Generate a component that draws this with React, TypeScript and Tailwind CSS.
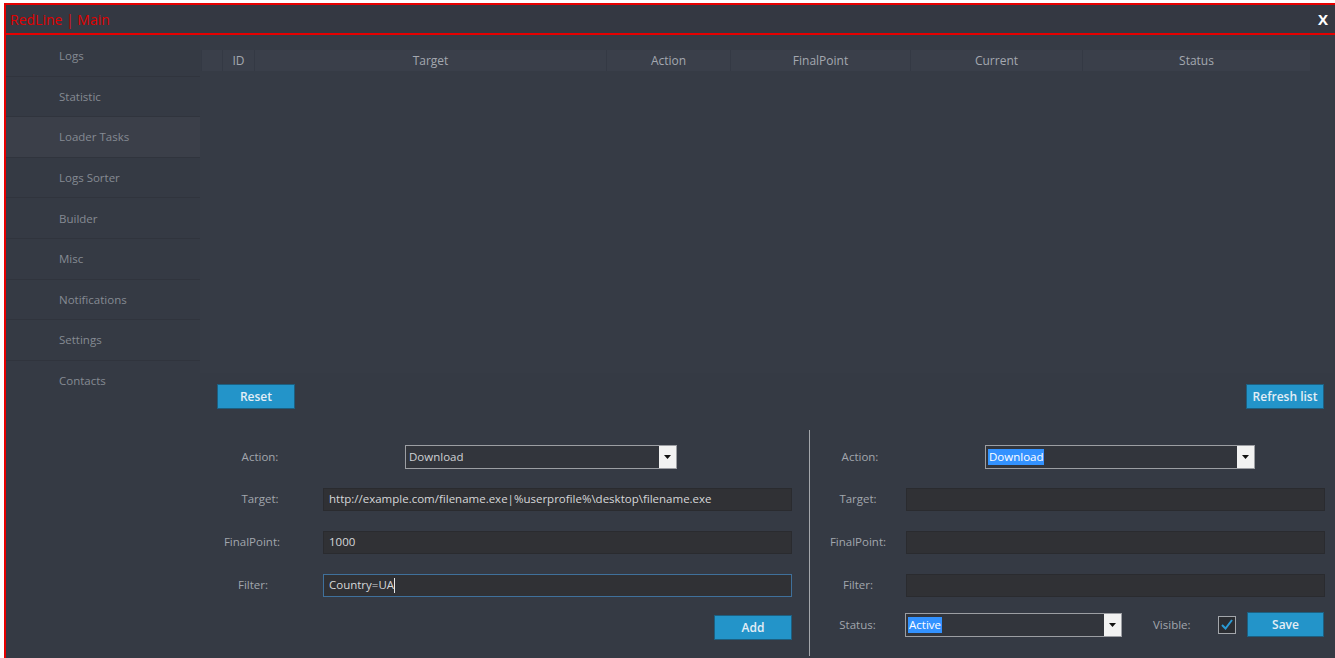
import type { ReactNode } from 'react'

const font = { fontFamily: '"Open Sans", "Noto Sans", sans-serif' }

const menu = ['Logs', 'Statistic', 'Loader Tasks', 'Logs Sorter', 'Builder', 'Misc', 'Notifications', 'Settings', 'Contacts']

const columns = [
  { name: '', w: 'w-[21px]' },
  { name: 'ID', w: 'w-[32px]' },
  { name: 'Target', w: 'w-[352px]' },
  { name: 'Action', w: 'w-[124px]' },
  { name: 'FinalPoint', w: 'w-[180px]' },
  { name: 'Current', w: 'w-[172px]' },
  { name: 'Status', w: 'w-[228px]' },
]

function Button({ children, className }: { children: ReactNode; className: string }) {
  return (
    <button
      className={`h-[25px] bg-[#2394c9] border border-[#1d5f80] text-[12px] font-semibold text-[#e3eef6] ${className}`}
    >
      {children}
    </button>
  )
}

function Select({ value, width, selected }: { value: string; width: string; selected?: boolean }) {
  return (
    <div className={`h-[24px] ${width} flex border border-[#9c9ea3] bg-[#32353c]`}>
      <div className="flex-1 flex items-center pl-[2px]">
        <span
          className={`text-[11.5px] leading-[16px] px-[1px] ${
            selected ? 'bg-[#3392ff] text-white' : 'text-[#cfd1d4]'
          }`}
        >
          {value}
        </span>
      </div>
      <div className="w-[17px] bg-[#f2f2f2] flex items-center justify-center">
        <svg width="7" height="4" viewBox="0 0 7 4">
          <path d="M0 0h7L3.5 4z" fill="#111" />
        </svg>
      </div>
    </div>
  )
}

function Input({ value, width, focused, caret }: { value?: string; width: string; focused?: boolean; caret?: boolean }) {
  return (
    <div
      className={`h-[23px] ${width} flex items-center pl-[5px] bg-[#303135] border ${
        focused ? 'border-[#3f709b]' : 'border-[#2a2b2f]'
      }`}
    >
      <span className="text-[11.5px] text-[#d6d7d9]">{value}</span>
      {caret && <span className="w-px h-[15px] bg-[#e8e8e8]" />}
    </div>
  )
}

// label cell, text centred in a fixed column
function Label({ text, width }: { text: string; width: string }) {
  return <div className={`${width} text-center text-[11.5px] text-[#a2a6ad]`}>{text}</div>
}

export default function App() {
  return (
    <div className="w-[1335px] h-[658px] overflow-hidden bg-white pt-[3px] pl-[4px]" style={font}>
      <div className="w-[1333px] h-[700px] border-2 border-[#e60000] bg-[#353a44] flex flex-col">
        <div className="h-[30px] flex items-center justify-between border-b-2 border-[#e60000] bg-[#343842] pl-[4px] pr-[7px]">
          <span className="text-[14px] text-[#e00000]">RedLine | Main</span>
          <span className="text-[15px] font-bold text-white">X</span>
        </div>

        <div className="flex flex-1">
          <nav className="w-[194px] pt-[1px] flex flex-col">
            {menu.map((item, i) => (
              <div
                key={item}
                className={`h-[40.6px] flex items-center pl-[53px] text-[11.5px] text-[#858a93] ${
                  i < menu.length - 1 ? 'border-b border-[#30343d]' : ''
                } ${item === 'Loader Tasks' ? 'bg-[#3b3f49]' : ''}`}
              >
                {item}
              </div>
            ))}
          </nav>

          <div className="flex-1 flex flex-col">
            <div className="h-[338px] w-[1133px] bg-[#363b45] pt-[15px] pl-[1px]">
              <div className="flex h-[21px]">
                {columns.map((c, i) => (
                  <div
                    key={i}
                    className={`${c.w} h-full flex items-center justify-center bg-[#3a3f4a] border-l border-[#343944] text-[12px] text-[#a4a8b0]`}
                  >
                    {c.name}
                  </div>
                ))}
              </div>
            </div>

            <div className="flex justify-between mt-[11px] pl-[17px] pr-[11px]">
              <Button className="w-[78px]">Reset</Button>
              <Button className="w-[78px]">Refresh list</Button>
            </div>

            <div className="flex mt-[21px]">
              <div className="w-[609px] h-[226px] pt-[15px] flex flex-col">
                <div className="flex items-center h-[24px]">
                  <Label text="Action:" width="w-[120px]" />
                  <div className="w-[85px]" />
                  <Select value="Download" width="w-[272px]" />
                </div>
                <div className="flex items-center h-[24px] mt-[18px]">
                  <Label text="Target:" width="w-[120px]" />
                  <div className="w-[3px]" />
                  <Input value="http://example.com/filename.exe|%userprofile%\desktop\filename.exe" width="w-[469px]" />
                </div>
                <div className="flex items-center h-[24px] mt-[19px]">
                  <Label text="FinalPoint:" width="w-[104px]" />
                  <div className="w-[19px]" />
                  <Input value="1000" width="w-[469px]" />
                </div>
                <div className="flex items-center h-[24px] mt-[19px]">
                  <Label text="Filter:" width="w-[106px]" />
                  <div className="w-[17px]" />
                  <Input value="Country=UA" width="w-[469px]" focused caret />
                </div>
                <div className="flex mt-[18px] pl-[514px]">
                  <Button className="w-[78px]">Add</Button>
                </div>
              </div>

              <div className="w-px h-[226px] bg-[#a3a6ab]" />

              <div className="flex-1 h-[226px] pt-[15px] flex flex-col">
                <div className="flex items-center h-[24px]">
                  <Label text="Action:" width="w-[100px]" />
                  <div className="w-[75px]" />
                  <Select value="Download" width="w-[270px]" selected />
                </div>
                <div className="flex items-center h-[24px] mt-[18px]">
                  <Label text="Target:" width="w-[96px]" />
                  <Input width="w-[419px]" />
                </div>
                <div className="flex items-center h-[24px] mt-[19px]">
                  <Label text="FinalPoint:" width="w-[96px]" />
                  <Input width="w-[419px]" />
                </div>
                <div className="flex items-center h-[24px] mt-[19px]">
                  <Label text="Filter:" width="w-[96px]" />
                  <Input width="w-[419px]" />
                </div>
                <div className="flex items-center h-[25px] mt-[15px]">
                  <Label text="Status:" width="w-[95px]" />
                  <Select value="Active" width="w-[217px]" selected />
                  <span className="ml-[31px] w-[65px] text-[11.5px] text-[#a2a6ad]">Visible:</span>
                  <div className="w-[18px] h-[18px] border border-[#a3a6ab] bg-[#2b2d32] flex items-center justify-center">
                    <svg width="12" height="11" viewBox="0 0 12 11">
                      <path d="M1 6l3.5 3.5L11 1" fill="none" stroke="#2a9ad4" strokeWidth="2" />
                    </svg>
                  </div>
                  <Button className="ml-[11px] w-[77px]">Save</Button>
                </div>
              </div>
            </div>
          </div>
        </div>
      </div>
    </div>
  )
}
